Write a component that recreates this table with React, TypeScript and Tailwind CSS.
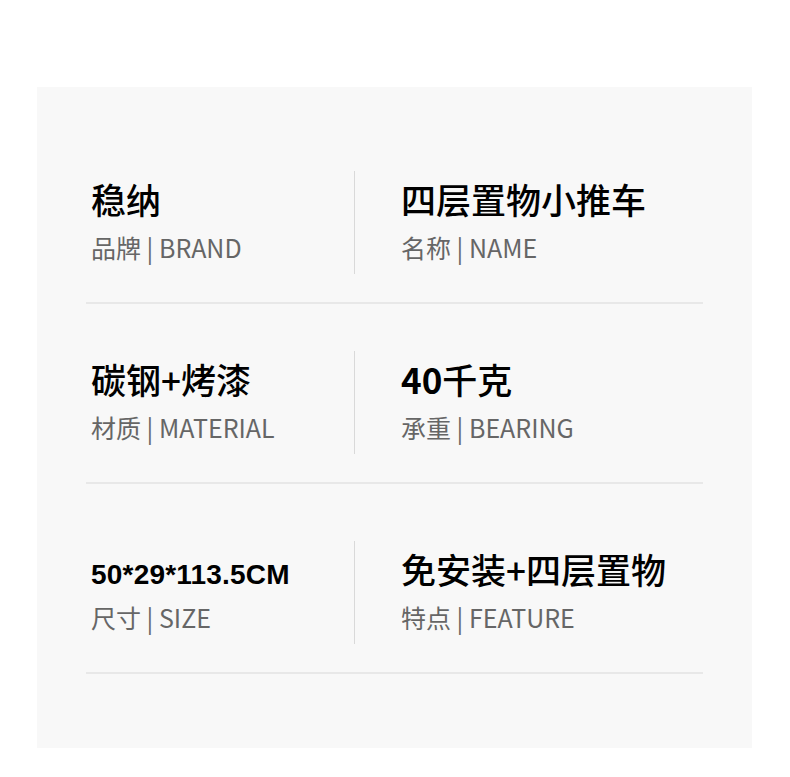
const cjk = "font-['Noto_Sans_CJK_SC','Noto_Sans',sans-serif]";

type Cell = { title: React.ReactNode; label: string };

const rows: { gap: string; cells: [Cell, Cell] }[] = [
  {
    gap: "mt-0",
    cells: [
      { title: "稳纳", label: "品牌 | BRAND" },
      { title: "四层置物小推车", label: "名称 | NAME" },
    ],
  },
  {
    gap: "mt-[47px]",
    cells: [
      { title: "碳钢+烤漆", label: "材质 | MATERIAL" },
      {
        title: (
          <>
            <span className="font-['Noto_Sans_CJK_SC',sans-serif] font-bold">40</span>千克
          </>
        ),
        label: "承重 | BEARING",
      },
    ],
  },
  {
    gap: "mt-[57px]",
    cells: [
      {
        title: (
          <span className="font-['Liberation_Sans',Arial,sans-serif] text-[28px] leading-[20px] font-bold tracking-[0.2px]">
            50*29*113.5CM
          </span>
        ),
        label: "尺寸 | SIZE",
      },
      { title: "免安装+四层置物", label: "特点 | FEATURE" },
    ],
  },
];

function Spec({ title, label }: Cell) {
  return (
    <>
      <div className="mt-[10px] font-['Noto_Sans_CJK_SC_Medium','Noto_Sans_CJK_SC',sans-serif] text-[35px] leading-[35px] text-black">
        {title}
      </div>
      <div className="mt-[19px] text-[25px] leading-[25px] text-[#666666]">{label}</div>
    </>
  );
}

export default function App() {
  return (
    <div className={`h-[777px] w-[790px] bg-white pl-[37px] pt-[87px] ${cjk}`}>
      <div className="h-[661px] w-[715px] bg-[#f8f8f8] pl-[49px] pt-[84px]">
        {rows.map((row, i) => (
          <div key={i} className={`w-[617px] ${row.gap}`}>
            <div className="flex h-[103px]">
              <div className="w-[268px] pl-[5px]">
                <Spec {...row.cells[0]} />
              </div>
              <div className="flex-1 border-l border-[#d9d9d9] pl-[46px]">
                <Spec {...row.cells[1]} />
              </div>
            </div>
            <div className="mt-[28px] h-[2px] bg-[#e8e8e8]" />
          </div>
        ))}
      </div>
    </div>
  );
}
